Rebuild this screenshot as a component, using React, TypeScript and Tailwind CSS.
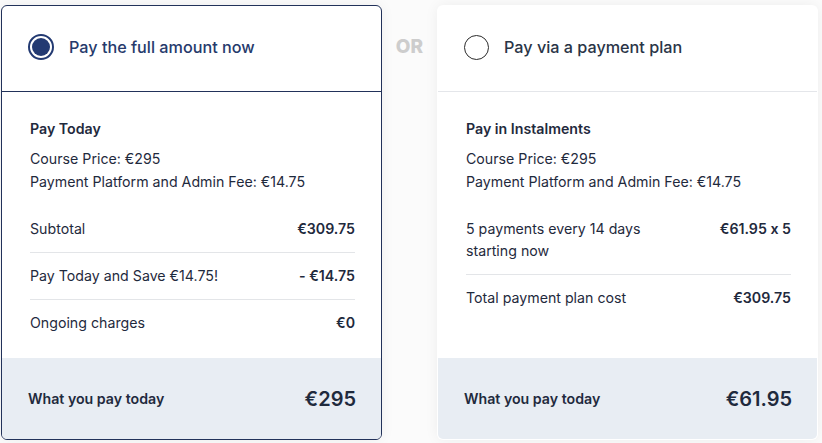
import React from 'react';

type Row = { label: React.ReactNode; value: string };

const font = { fontFamily: 'Inter, Lato, Arial, sans-serif' };

function Radio({ checked }: { checked: boolean }) {
  if (checked) {
    return (
      <span className="flex h-[26px] w-[26px] shrink-0 items-center justify-center rounded-full border-2 border-[#233a72] bg-white">
        <span className="h-[18px] w-[18px] rounded-full bg-[#233a72]" />
      </span>
    );
  }
  return <span className="h-[25px] w-[25px] shrink-0 rounded-full border-[1.5px] border-[#2b2b2b] bg-white" />;
}

function PlanCard({
  selected,
  title,
  heading,
  rows,
  total,
}: {
  selected: boolean;
  title: string;
  heading: string;
  rows: Row[];
  total: string;
}) {
  return (
    <div
      className={`flex h-[435px] w-[381px] flex-col overflow-hidden rounded-[6px] bg-white shadow-[0_0_14px_rgba(0,0,0,0.06)] ${
        selected ? 'border border-[#22325a]' : 'border border-transparent'
      }`}
    >
      {/* Header */}
      <div
        className={`flex h-[86px] shrink-0 items-center gap-[15px] px-[26px] pb-[3px] ${
          selected ? 'border-b border-[#22325a]' : 'border-b border-[#e4e6ea]'
        }`}
      >
        <Radio checked={selected} />
        <span className={`text-[16.2px] font-medium ${selected ? 'text-[#263a6c]' : 'text-[#2a3547]'}`}>{title}</span>
      </div>

      {/* Body */}
      <div className="flex-1 pl-[28px] pr-[26px] pt-[27px] text-[14.2px] text-[#1f2a3d]">
        <div className="font-semibold leading-[20px]">{heading}</div>
        <div className="mt-[8px] leading-[23px]">
          <div>Course Price: €295</div>
          <div>Payment Platform and Admin Fee: €14.75</div>
        </div>
        <div className="mt-[13px]">
          {rows.map((r, i) => (
            <div
              key={i}
              className={`flex items-start justify-between py-[12px] leading-[22px] ${
                i < rows.length - 1 ? 'border-b border-[#e3e5e8]' : ''
              }`}
            >
              <span>{r.label}</span>
              <span className="font-semibold">{r.value}</span>
            </div>
          ))}
        </div>
      </div>

      {/* Footer */}
      <div className="flex h-[81px] shrink-0 items-center justify-between bg-[#e8edf3] pl-[26px] pr-[25px] text-[#1f2a3d]">
        <span className="text-[14.2px] font-semibold">What you pay today</span>
        <span className="text-[20px] font-semibold">{total}</span>
      </div>
    </div>
  );
}

export default function App() {
  return (
    <div
      className="min-h-[443px] w-[822px] bg-[#fbfbfb] pl-[1px] pt-[5px] [font-feature-settings:'calt'_0]"
      style={font}
    >
      <div className="flex items-start">
        <PlanCard
          selected
          title="Pay the full amount now"
          heading="Pay Today"
          rows={[
            { label: 'Subtotal', value: '€309.75' },
            { label: 'Pay Today and Save €14.75!', value: '- €14.75' },
            { label: 'Ongoing charges', value: '€0' },
          ]}
          total="€295"
        />
        <div className="flex h-[86px] w-[55px] items-center justify-center pb-[1px] text-[19px] font-extrabold text-[#cdcdcd]">
          OR
        </div>
        <PlanCard
          selected={false}
          title="Pay via a payment plan"
          heading="Pay in Instalments"
          rows={[
            {
              label: (
                <>
                  5 payments every 14 days
                  <br />
                  starting now
                </>
              ),
              value: '€61.95 x 5',
            },
            { label: 'Total payment plan cost', value: '€309.75' },
          ]}
          total="€61.95"
        />
      </div>
    </div>
  );
}
